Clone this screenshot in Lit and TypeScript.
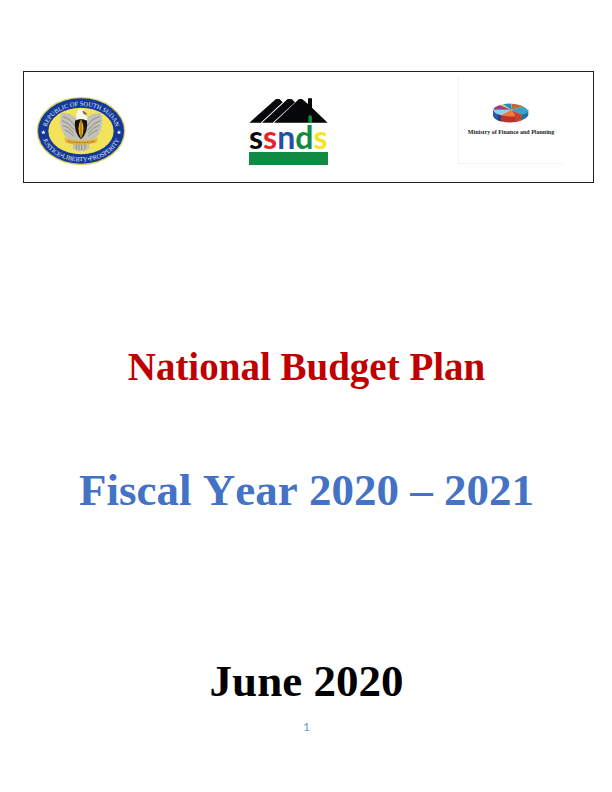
import { LitElement, html, css } from "lit";
import { customElement } from "lit/decorators.js";

@customElement("state-emblem")
class StateEmblem extends LitElement {
  static styles = css`
    :host { display: block; }
    .art { display: block; width: 90px; height: 70px; }
    .ring { font: 19px "Liberation Serif", serif; fill: #e8ecf4; }
  `;
  render() {
    return html`
      <svg class="art" viewBox="13 12 270 210" role="img" aria-label="Republic of South Sudan emblem">
        <defs>
          <path id="upper" d="M44 118A104 76 0 0 1 253 118" />
          <path id="lower" d="M29 118A119 90 0 0 0 268 118" />
        </defs>
        <ellipse cx="148" cy="117" rx="133" ry="102" fill="#d9cf5a" />
        <ellipse cx="148" cy="117" rx="129" ry="98" fill="#12389a" />
        <ellipse cx="148" cy="117" rx="98" ry="70" fill="#f3e35a" />
        <text class="ring" text-anchor="middle"><textPath href="#upper" startOffset="50%">REPUBLIC OF SOUTH SUDAN</textPath></text>
        <text class="ring" text-anchor="middle"><textPath href="#lower" startOffset="50%">JUSTICE•LIBERTY•PROSPERITY</textPath></text>
        <path d="M35 114l2 5h5l-4 3 1 5-4-3-4 3 1-5-4-3h5zM262 114l2 5h5l-4 3 1 5-4-3-4 3 1-5-4-3h5z" fill="#fff" />
        <path d="M138 86C126 68 106 60 90 64C82 82 86 106 94 120C98 134 110 144 126 148L122 168L136 178H160L174 168L170 148C188 144 200 134 204 120C212 106 214 82 208 64C192 60 170 68 158 86Z" fill="#c3c2b8" />
        <path d="M94 74Q116 80 130 102M92 86Q112 92 128 114M94 100Q112 104 126 124M99 114Q112 118 126 132M204 74Q180 80 166 102M206 86Q186 92 168 114M203 100Q186 104 170 124M198 114Q186 118 170 132M134 150V172M142 154V174M150 154V174M160 152V172" fill="none" stroke="#8d8c85" stroke-width="3" />
        <path d="M134 78Q132 54 146 50Q162 50 163 70L168 82L158 92H138Z" fill="#f7f6ec" />
        <path d="M152 56Q164 58 166 70L156 66Z" fill="#6e6a4c" />
        <path d="M130 86Q148 76 166 86Q170 122 148 142Q126 122 130 86Z" fill="#15130c" />
        <path d="M148 80Q163 110 148 140Q133 110 148 80Z" fill="#eeb01f" />
        <path d="M148 84V138" stroke="#5a3d08" stroke-width="2" />
        <path d="M98 138Q122 146 148 146Q174 146 198 138L194 152Q172 158 148 158Q124 158 102 152Z" fill="#e2b23c" />
        <path d="M110 148Q148 156 188 148" fill="none" stroke="#8d6518" stroke-width="3" stroke-dasharray="5 3" />
      </svg>
    `;
  }
}

@customElement("ssnds-logo")
class SsndsLogo extends LitElement {
  static styles = css`
    :host { display: block; width: 79px; }
    .mark { position: relative; display: flex; flex-direction: column; justify-content: space-between; height: 67px; }
    .roof { display: block; width: 79px; height: 25px; }
    .bar { height: 13px; background: #118a43; }
    .word { position: absolute; inset: 17px 0 auto 0; display: flex; justify-content: center; white-space: nowrap;
      font: bold 32px/44px Lato, sans-serif; }
    .k { color: #090909; }
    .r { color: #ec2027; }
    .b { color: #2450a4; }
    .g { color: #118a43; }
    .y { color: #f3e51f; }
  `;
  render() {
    return html`
      <div class="mark">
        <svg class="roof" viewBox="27 24 237 75" aria-hidden="true">
          <path d="M28 98L108 27H118L128 37L62 98ZM66 98L143 27H155L165 37L98 98ZM102 98L177 27H186L204 42V25H216V53L263 98Z" fill="#060708" />
          <path d="M205 99V80Q210 70 216 80V99Z" fill="#118a43" />
        </svg>
        <div class="word"><span class="k">s</span><span class="r">s</span><span class="b">n</span><span class="g">d</span><span class="y">s</span></div>
        <div class="bar"></div>
      </div>
    `;
  }
}

@customElement("ministry-logo")
class MinistryLogo extends LitElement {
  static styles = css`
    :host { display: block; }
    .card { box-sizing: border-box; width: 106px; height: 88px; padding-top: 27px; display: flex; flex-direction: column;
      align-items: center; border: 1px solid #f4f4f4; border-width: 0 0 1px 1px; }
    .pie { display: block; width: 36px; height: 21px; }
    .name { font: bold 6px/16px "Liberation Serif", serif; color: #1c1c1c; white-space: nowrap; }
  `;
  render() {
    return html`
      <div class="card">
        <svg class="pie" viewBox="126 102 108 63" aria-hidden="true">
          <path d="M126 124V140Q130 152 152 158V134Z" fill="#233f8e" />
          <path d="M126 124V140L140 152V132Z" fill="#2f5aa8" />
          <path d="M150 138V157Q182 166 212 154V134Z" fill="#b5352c" />
          <path d="M212 132V154Q230 146 232 138V122Z" fill="#1c6f9f" />
          <path d="M192 140L212 136V154L192 160Z" fill="#c4432e" />
          <path d="M180 122L182 104Q204 105 218 113Z" fill="#c06b35" />
          <path d="M180 122L218 113Q232 120 231 128Q226 135 212 137Z" fill="#36a0cf" />
          <path d="M180 122L212 137Q204 141 194 142Z" fill="#c3442f" />
          <path d="M180 122L194 142Q172 144 150 139Z" fill="#ee7a35" />
          <path d="M180 122L150 139Q130 134 127 123Z" fill="#8fd0ee" />
          <path d="M180 122L127 122Q128 113 148 108Z" fill="#96427f" />
          <path d="M180 122L148 108L157 106Z" fill="#c9cf52" />
          <path d="M180 122L157 106Q168 103 181 104Z" fill="#1e8fc2" />
        </svg>
        <div class="name">Ministry of Finance and Planning</div>
      </div>
    `;
  }
}

@customElement("app-root")
class AppRoot extends LitElement {
  static styles = css`
    :host { display: block; background: #fff; font-family: "Liberation Serif", serif; }
    .cover { padding: 71px 18px 56px 23px; }
    .logos { display: grid; grid-template-columns: 212fr 208fr 135fr; align-items: start;
      border: 1px solid #222; padding: 4px 0 16px 12px; }
    .emblem { margin-top: 20px; }
    .ssnds { margin-top: 22px; }
    .titles { display: flex; flex-direction: column; align-items: center; text-align: center; padding-right: 4px; font-kerning: none; }
    h1, h2, p { margin: 0; font-weight: bold; }
    h1 { margin-top: 160px; font-size: 39px; line-height: 48px; color: #c00000; }
    h2 { margin-top: 73px; font-size: 45px; line-height: 52px; color: #4472c4; }
    .date { margin-top: 139px; font-size: 45px; line-height: 52px; color: #000; }
    .page { margin-top: 12px; text-align: center; padding-right: 4px; font: 12px/16px Lato, sans-serif; color: #5b9bd5; }
  `;
  render() {
    return html`
      <main class="cover">
        <header class="logos">
          <state-emblem class="emblem"></state-emblem>
          <ssnds-logo class="ssnds"></ssnds-logo>
          <ministry-logo></ministry-logo>
        </header>
        <section class="titles">
          <h1>National Budget Plan</h1>
          <h2>Fiscal Year 2020 – 2021</h2>
          <p class="date">June 2020</p>
        </section>
        <footer class="page">1</footer>
      </main>
    `;
  }
}
